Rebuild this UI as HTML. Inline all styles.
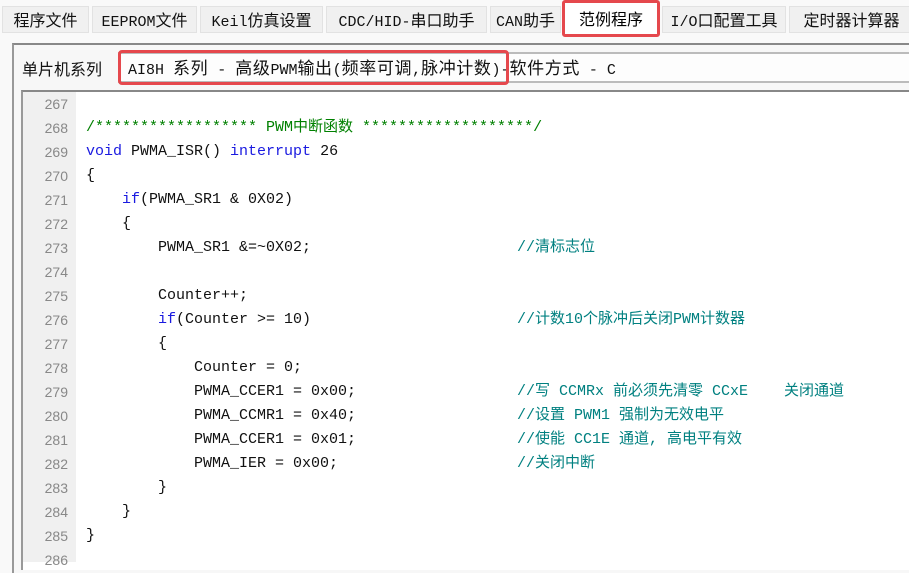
<!DOCTYPE html>
<html><head><meta charset="utf-8"><style>
*{margin:0;padding:0;box-sizing:border-box}
body{width:909px;height:561px;overflow:hidden;background:#f9f9f9;position:relative;font-family:"Liberation Mono","Noto Sans CJK SC",monospace}
.tab{position:absolute;top:6px;height:27px;background:#f0f0f0;border:1px solid #e2e2e2;font-size:15px;line-height:25px;text-align:center;color:#111;white-space:nowrap}
.cj{font-family:"Noto Sans CJK SC",sans-serif;font-size:16px}
.sel{position:absolute;left:562px;top:0;width:98px;height:37px;border:3px solid #e5484d;border-radius:3px;background:#fff;text-align:center;line-height:30px;font-size:16px;font-family:"Noto Sans CJK SC",sans-serif}
.panel{position:absolute;left:12px;top:43px;width:910px;height:530px;border-left:2px solid #999;border-top:2px solid #888;background:#f7f7f7}
.lbl{position:absolute;left:22px;top:56px;font-size:16px;font-family:"Noto Sans CJK SC",sans-serif;color:#111}
.combo{position:absolute;left:118px;top:52px;width:800px;height:31px;background:#fdfdfd;border-top:2px solid #bbb;border-bottom:2px solid #bbb}
.ct{position:absolute;left:128px;top:55px;font-size:15px;line-height:24px;white-space:pre;color:#111}
.ct b{font-weight:normal;font-family:"Noto Sans CJK SC",sans-serif;font-size:17px;letter-spacing:0.6px}
.red{position:absolute;left:118px;top:50px;width:391px;height:35px;border:3px solid #e5484d;border-radius:4px}
.code{position:absolute;left:21px;top:90px;width:900px;height:480px;background:#fff;border-top:2px solid #888;border-left:2px solid #999}
.gut{position:absolute;left:23px;top:92px;width:53px;height:470px;background:#f0f0f0}
.ln{position:absolute;left:23px;width:45px;text-align:right;font-family:"Liberation Sans",sans-serif;font-size:14px;color:#888;line-height:24px}
.l{position:absolute;left:86px;font-size:15px;line-height:24px;white-space:pre;color:#111}
.c{position:absolute;left:517px;font-size:15px;line-height:24px;white-space:pre;color:#008080}
.k{color:#1a1ae0}.g{color:#008000}
</style></head><body>
<div class="tab cj" style="left:2px;width:87px">程序文件</div>
<div class="tab" style="left:92px;width:105px">EEPROM<span class="cj">文件</span></div>
<div class="tab" style="left:200px;width:123px">Keil<span class="cj">仿真设置</span></div>
<div class="tab" style="left:326px;width:161px">CDC/HID-<span class="cj">串口助手</span></div>
<div class="tab" style="left:490px;width:71px">CAN<span class="cj">助手</span></div>
<div class="sel">范例程序</div>
<div class="tab" style="left:662px;width:124px">I/O<span class="cj">口配置工具</span></div>
<div class="tab cj" style="left:789px;width:125px">定时器计算器</div>
<div class="panel"></div>
<div class="lbl">单片机系列</div>
<div class="combo"></div>
<div class="ct">AI8H <b>系列</b> - <b>高级</b>PWM<b>输出</b>(<b>频率可调</b>,<b>脉冲计数</b>)-<b>软件方式</b> - C</div>
<div class="red"></div>
<div class="code"></div>
<div class="gut"></div>
<div class="ln" style="top:92px">267</div>
<div class="ln" style="top:116px">268</div>
<div class="ln" style="top:140px">269</div>
<div class="ln" style="top:164px">270</div>
<div class="ln" style="top:188px">271</div>
<div class="ln" style="top:212px">272</div>
<div class="ln" style="top:236px">273</div>
<div class="ln" style="top:260px">274</div>
<div class="ln" style="top:284px">275</div>
<div class="ln" style="top:308px">276</div>
<div class="ln" style="top:332px">277</div>
<div class="ln" style="top:356px">278</div>
<div class="ln" style="top:380px">279</div>
<div class="ln" style="top:404px">280</div>
<div class="ln" style="top:428px">281</div>
<div class="ln" style="top:452px">282</div>
<div class="ln" style="top:476px">283</div>
<div class="ln" style="top:500px">284</div>
<div class="ln" style="top:524px">285</div>
<div class="ln" style="top:548px">286</div>
<div class="l g" style="top:116px">/****************** PWM中断函数 *******************/</div>
<div class="l" style="top:140px"><span class="k">void</span> PWMA_ISR() <span class="k">interrupt</span> 26</div>
<div class="l" style="top:164px">{</div>
<div class="l" style="top:188px">    <span class="k">if</span>(PWMA_SR1 &amp; 0X02)</div>
<div class="l" style="top:212px">    {</div>
<div class="l" style="top:236px">        PWMA_SR1 &amp;=~0X02;</div>
<div class="c" style="top:236px">//清标志位</div>
<div class="l" style="top:284px">        Counter++;</div>
<div class="l" style="top:308px">        <span class="k">if</span>(Counter &gt;= 10)</div>
<div class="c" style="top:308px">//计数10个脉冲后关闭PWM计数器</div>
<div class="l" style="top:332px">        {</div>
<div class="l" style="top:356px">            Counter = 0;</div>
<div class="l" style="top:380px">            PWMA_CCER1 = 0x00;</div>
<div class="c" style="top:380px">//写 CCMRx 前必须先清零 CCxE    关闭通道</div>
<div class="l" style="top:404px">            PWMA_CCMR1 = 0x40;</div>
<div class="c" style="top:404px">//设置 PWM1 强制为无效电平</div>
<div class="l" style="top:428px">            PWMA_CCER1 = 0x01;</div>
<div class="c" style="top:428px">//使能 CC1E 通道, 高电平有效</div>
<div class="l" style="top:452px">            PWMA_IER = 0x00;</div>
<div class="c" style="top:452px">//关闭中断</div>
<div class="l" style="top:476px">        }</div>
<div class="l" style="top:500px">    }</div>
<div class="l" style="top:524px">}</div>
</body></html>
